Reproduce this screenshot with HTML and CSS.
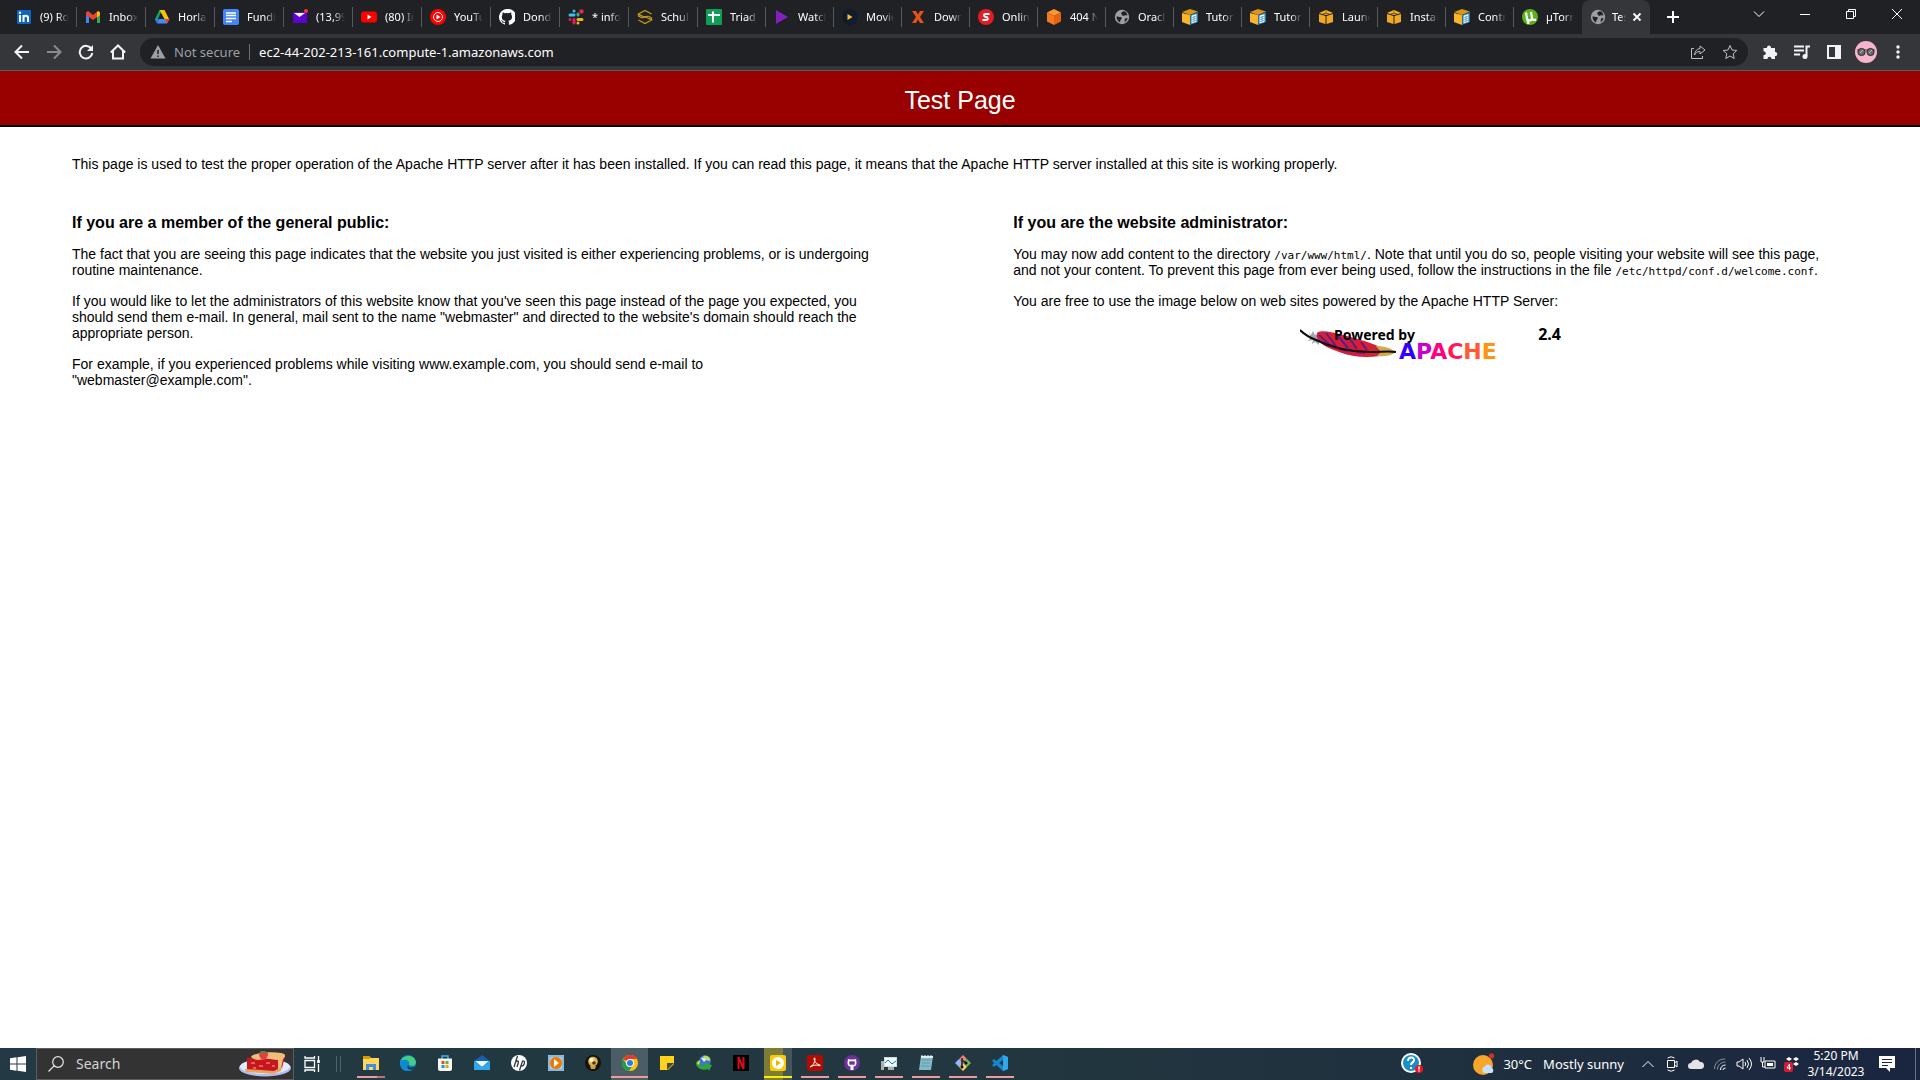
FILE: index.html
```html
<!DOCTYPE html>
<html lang="en">
<head>
<meta charset="utf-8">
<title>Test Page</title>
<link rel="stylesheet" href="styles.css">
</head>
<body>
<svg class="defs" aria-hidden="true">
  <symbol id="globe" viewBox="0 0 16 16"><circle cx="8" cy="8" r="7.200" fill="#9aa0a6"/><path d="M2.500 7.500c1.500-.5 2 .8 4 .5 1.500 0 1.500 2 .5 2.500-1 .5-.5 2-1 3-2-1-3.500-3-3.500-6zM8 3c1-1 3-1 4 0l1.500 3c-1 1-2 0-3 .5-1 .5-2 .5-2.500-.5-.5-1-1.500-1.500 0-3zM11 9.500l2.500-.5c0 2-1.500 3.500-3 4z" fill="#202124"/></symbol>
  <symbol id="cube" viewBox="0 0 16 16"><path d="M1 4l7-3 7 3-7 2z" fill="#f9b42c"/><path d="M1 5l6.500 2v8L1 13zM15 5L8.500 7v8L15 13z" fill="#efa922"/><path d="M8 2v2M5 4.500h6" stroke="#8a5f0b"/></symbol>
  <symbol id="cubedoc" viewBox="0 0 16 16"><path d="M0 3l8-3 8 2.500L8 6z" fill="#d9961a"/><path d="M0 4l8 2v10l-8-3z" fill="#fbb42c"/><path d="M8 6l8-3v10l-8 3z" fill="#2475a5"/><path d="M9.500 6.500l5-1.500v8l-5 1.500z" fill="#eaf6ff"/><path d="M10.500 8.500l3-1M10.500 10.500l3-1M10.500 12.500l3-1" stroke="#2682bb"/></symbol>
</svg>

<header class="browser">
  <div class="titlebar">
    <nav class="tabs" aria-label="Tabs">
      <a class="tab" href="#"><svg viewBox="0 0 16 16"><rect x="1" y="1" width="14" height="14" rx="1" fill="#0a66c2"/><path d="M4 6v7M7.500 6v7M7.500 9c0-3 4.500-3 4.500 0v4" fill="none" stroke="#fff" stroke-width="2"/><circle cx="4" cy="3.700" r="1.200" fill="#fff"/></svg><span>(9) Rol</span></a>
      <a class="tab" href="#"><svg viewBox="0 0 16 16"><path d="M1 4v10h3V6z" fill="#4285f4"/><path d="M15 4v10h-3V6z" fill="#34a853"/><path d="M1 3.500L3 2l5 4 5-4 2 1.500V6l-7 5-7-5z" fill="#ea4335"/><path d="M12 3l1.500-1L15 3.500V6l-3 2.500z" fill="#fbbc04"/></svg><span>Inbox (</span></a>
      <a class="tab" href="#"><svg viewBox="0 0 16 16"><path d="M5.500 1H8l-5.500 12L1 10z" fill="#0da960"/><path d="M5.500 1h5L15 10h-4.500z" fill="#ffc107"/><path d="M3 14.500L5 10h10.500L13 14.500z" fill="#4688f4"/><path d="M1 10h4l-2 4.500z" fill="#2684fc"/><path d="M11 10h4.500L13 14.500z" fill="#ea4335"/></svg><span>Horlar</span></a>
      <a class="tab" href="#"><svg viewBox="0 0 16 16"><rect width="16" height="16" rx="2" fill="#4285f4"/><path d="M3 4h10M3 6.500h10M3 9.500h10M3 12.500h6" stroke="#fff" stroke-width="1.500"/></svg><span>Fundin</span></a>
      <a class="tab" href="#"><svg viewBox="0 0 16 16"><rect x="1" y="3" width="14" height="11" rx="1" fill="#6001d2"/><path d="M2 4h11L7.500 8z" fill="#fff"/><circle cx="14" cy="2" r="2" fill="#ff333a"/></svg><span>(13,99</span></a>
      <a class="tab" href="#"><svg viewBox="0 0 16 16"><rect y="2.500" width="16" height="11" rx="3" fill="#f00"/><path d="M6.500 5.500v5L10.500 8z" fill="#fff"/></svg><span>(80) In</span></a>
      <a class="tab" href="#"><svg viewBox="0 0 16 16"><circle cx="8" cy="8" r="8" fill="#f00"/><circle cx="8" cy="8" r="4.500" fill="none" stroke="#fff"/><path d="M6.500 5.500v5L10.500 8z" fill="#fff"/></svg><span>YouTub</span></a>
      <a class="tab" href="#"><svg viewBox="0 0 16 16"><path fill="#fff" d="M8 0a8 8 0 0 0-2.500 15.600c.4.100.5-.2.500-.4v-1.500C3.800 14.200 3.300 13 3.300 13c-.4-.9-.9-1.200-.9-1.200-.7-.5.1-.5.100-.5.800.1 1.200.8 1.200.8.7 1.200 1.900.9 2.300.7 0-.6.300-.9.500-1.100-2-.2-3.700-.9-3.700-4 0-.9.300-1.600.8-2.100 0-.2-.4-1 .1-2.100 0 0 .7-.3 2.200.8a8 8 0 0 1 4 0c1.500-1.100 2.200-.8 2.200-.8.500 1.100.1 1.900.1 2.100.5.500.8 1.200.8 2.100 0 3.100-1.800 3.800-3.700 4 .3.200.6.700.6 1.500v2.200c0 .2.100.5.600.4A8 8 0 0 0 8 0"/></svg><span>Dondo</span></a>
      <a class="tab" href="#"><svg viewBox="0 0 16 16" fill="none" stroke-width="3" stroke-linecap="round"><path d="M6 2v0M2 6h4" stroke="#36c5f0"/><path d="M10 6V5" stroke="#2eb67d"/><path d="M10 10.500h4M10 14v0" stroke="#ecb22e"/><path d="M2 10.500v0M6 10.500V14" stroke="#e01e5a"/><circle cx="13.500" cy="2.500" r="1.300" fill="#fff" stroke="#e8223c" stroke-width="2"/></svg><span>* info-</span></a>
      <a class="tab" href="#"><svg viewBox="0 0 16 16" fill="none" stroke="#c79a1d" stroke-width="1.300"><path d="M14.500 5L8 1.500 1.500 5 8 8.500l3-1.500M1.500 11L8 14.500l6.500-3.500L8 7.500l-3 1.500M1.500 5v2l4 2M14.500 11V9l-3-2"/></svg><span>Schull</span></a>
      <a class="tab" href="#"><svg viewBox="0 0 16 16"><rect width="16" height="16" rx="1" fill="#0f9d58"/><path d="M2 6h12M7 2.500v11" stroke="#fff" stroke-width="2"/></svg><span>Triad -</span></a>
      <a class="tab" href="#"><svg viewBox="0 0 16 16"><path d="M2 1l12 7-12 7z" fill="#8320bd"/></svg><span>Watch</span></a>
      <a class="tab" href="#"><svg viewBox="0 0 16 16"><circle cx="8" cy="8" r="8" fill="#111c2c"/><path d="M5.500 5v6l5-3z" fill="#fbc02d"/></svg><span>Movie</span></a>
      <a class="tab" href="#"><svg viewBox="0 0 16 16"><path d="M2 2h4l2 3.500L10 2h4l-4 6 4 6h-4L8 10.500 6 14H2l4-6z" fill="#e8501c"/></svg><span>Down</span></a>
      <a class="tab" href="#"><svg viewBox="0 0 16 16"><circle cx="8" cy="8" r="8" fill="#e31b23"/><path d="M11.500 5H7.500C5 5 6 8 8 8s2.500 3 0 3H4.500" fill="none" stroke="#fff" stroke-width="2"/></svg><span>Online</span></a>
      <a class="tab" href="#"><svg viewBox="0 0 16 16"><path d="M8 0l7 3.500L8 7 1 3.500z" fill="#fb9632"/><path d="M1 3.500L8 7v9l-7-3.500z" fill="#f47b20"/><path d="M15 3.500L8 7v9l7-3.500z" fill="#e6620e"/></svg><span>404 No</span></a>
      <a class="tab" href="#"><svg><use href="#globe"/></svg><span>Oracle</span></a>
      <a class="tab" href="#"><svg><use href="#cubedoc"/></svg><span>Tutoria</span></a>
      <a class="tab" href="#"><svg><use href="#cubedoc"/></svg><span>Tutoria</span></a>
      <a class="tab" href="#"><svg><use href="#cube"/></svg><span>Launch</span></a>
      <a class="tab" href="#"><svg><use href="#cube"/></svg><span>Instanc</span></a>
      <a class="tab" href="#"><svg><use href="#cubedoc"/></svg><span>Contro</span></a>
      <a class="tab" href="#"><svg viewBox="0 0 16 16"><circle cx="8" cy="8" r="8" fill="#5bb31b"/><path d="M4 3.500l1 6c.5 3 5 2.500 5-.5l-1-6M10 9c.5 2 2 2.500 4 1.500M5 9l1.500 6" fill="none" stroke="#fff" stroke-width="2.200"/></svg><span>µTorre</span></a>
      <a class="tab tab-active" href="#" aria-current="page"><svg><use href="#globe"/></svg><span>Test</span><svg class="close" viewBox="0 0 10 10"><path d="M1.500 1.500l7 7M8.500 1.500l-7 7" stroke="#fff" stroke-width="1.800"/></svg></a>
    </nav>
    <button class="new-tab" aria-label="New tab"><svg viewBox="0 0 12 12"><path d="M6 0v12M0 6h12" stroke="#fff" stroke-width="2"/></svg></button>
    <div class="window-controls">
      <button aria-label="Search tabs"><svg viewBox="0 0 12 12"><path d="M1 3.500l5 5 5-5"/></svg></button>
      <button aria-label="Minimize"><svg viewBox="0 0 12 12"><path d="M1 6.500h10"/></svg></button>
      <button aria-label="Restore"><svg viewBox="0 0 12 12"><path d="M1.500 3.500h7v7h-7zM3.500 3V1.500h7v7H9"/></svg></button>
      <button aria-label="Close"><svg viewBox="0 0 12 12"><path d="M1 1l10 10M11 1L1 11"/></svg></button>
    </div>
  </div>
  <div class="toolbar">
    <button aria-label="Back"><svg viewBox="0 0 16 16"><path d="M15 8H2M8 1.500L1.500 8 8 14.500"/></svg></button>
    <button class="dim" aria-label="Forward"><svg viewBox="0 0 16 16"><path d="M1 8h13M8 1.500L14.500 8 8 14.500"/></svg></button>
    <button aria-label="Reload"><svg viewBox="0 0 16 16"><path d="M13.500 5A6.300 6.300 0 1 0 14.300 9"/><path d="M15 1v6H9z" fill="#f1f3f4" stroke="none"/></svg></button>
    <button aria-label="Home"><svg viewBox="0 0 16 16"><path d="M.8 8.500L8 1.500l7.200 7M3 7v7.500h10V7"/></svg></button>
    <div class="omnibox">
      <svg viewBox="0 0 16 16"><path d="M8 1l7.500 13.500H.5z" fill="#9aa0a6"/><path d="M8 6v4M8 11.500v1.500" stroke="#202124" stroke-width="1.500"/></svg>
      <label for="url">Not secure</label>
      <input id="url" type="text" value="ec2-44-202-213-161.compute-1.amazonaws.com">
      <button aria-label="Share"><svg class="thin" viewBox="0 0 16 16"><path d="M4 4.500H1.500v10h11V12M10 2l5 4-5 4V7.500C7 7.500 5.500 9 4.500 11c.3-3.500 2-6 5.500-6.500z"/></svg></button>
      <button aria-label="Bookmark"><svg class="thin" viewBox="0 0 16 16"><path d="M8 1.500l2 4.500 4.800.5-3.600 3.200 1 4.800L8 12l-4.200 2.500 1-4.800L1.200 6.500 6 6z"/></svg></button>
    </div>
    <button aria-label="Extensions"><svg viewBox="0 0 16 16"><path d="M1.500 4H5c-.5-3.500 4.500-3.500 4 0h4v4c3-.5 3 4.500 0 4v3H9.500c0-3-4-3-4 0h-4v-3.700c3 0 3-4 0-4z" fill="#f1f3f4" stroke="none"/></svg></button>
    <button aria-label="Media"><svg viewBox="0 0 16 16"><path d="M0 2.500h10M0 6.500h10M0 10.500h6M12.500 12V2.500H16"/><circle cx="11" cy="12.500" r="2.500" fill="#f1f3f4" stroke="none"/></svg></button>
    <button aria-label="Side panel"><svg viewBox="0 0 16 16"><path d="M2 2h12v12H2z"/><path d="M9 2h5v12H9z" fill="#f1f3f4" stroke="none"/></svg></button>
    <button class="avatar" aria-label="Profile"><svg viewBox="0 0 22 22"><circle cx="11" cy="11" r="11" fill="#f8b4cc" stroke="none"/><path d="M2 9h18" stroke="#40383c"/><circle cx="6.500" cy="11" r="3.600" fill="#666b6d" stroke="#292929"/><circle cx="15.500" cy="11" r="3.600" fill="#666b6d" stroke="#292929"/><path d="M5 12l3-3M14 12l3-3" stroke="#b9c0c0"/></svg></button>
    <button aria-label="Menu"><svg viewBox="0 0 16 16"><g fill="#f1f3f4" stroke="none"><circle cx="8" cy="3" r="1.700"/><circle cx="8" cy="8" r="1.700"/><circle cx="8" cy="13" r="1.700"/></g></svg></button>
  </div>
</header>

<main class="page">
  <h1>Test Page</h1>
  <div class="content">
    <p>This page is used to test the proper operation of the Apache HTTP server after it has been installed. If you can read this page, it means that the Apache HTTP server installed at this site is working properly.</p>
    <div class="columns">
      <section>
        <h2>If you are a member of the general public:</h2>
        <p>The fact that you are seeing this page indicates that the website you just visited is either experiencing problems, or is undergoing routine maintenance.</p>
        <p>If you would like to let the administrators of this website know that you've seen this page instead of the page you expected, you should send them e-mail. In general, mail sent to the name "webmaster" and directed to the website's domain should reach the appropriate person.</p>
        <p>For example, if you experienced problems while visiting www.example.com, you should send e-mail to "webmaster@example.com".</p>
      </section>
      <section>
        <h2>If you are the website administrator:</h2>
        <p>You may now add content to the directory <code>/var/www/html/</code>. Note that until you do so, people visiting your website will see this page, and not your content. To prevent this page from ever being used, follow the instructions in the file <code>/etc/httpd/conf.d/welcome.conf</code>.</p>
        <p>You are free to use the image below on web sites powered by the Apache HTTP Server:</p>
        <svg class="apache" viewBox="0 0 262 34" role="img" aria-label="Powered by Apache 2.4">
          <defs><linearGradient id="feather"><stop stop-color="#c8283d"/><stop offset=".3" stop-color="#e01b3c"/><stop offset=".5" stop-color="#c41e48"/><stop offset=".7" stop-color="#e11b35"/><stop offset="1" stop-color="#c02b3a"/></linearGradient></defs>
          <path d="M8 5l3 3 2-4 2 4 4-1v11l-4-3-3 2 1-4-5 1 3-4z" fill="#9daab2"/>
          <path d="M18 5c4-2 15 0 21 2 12 3 24 6 34 10l7 3v9c-14 2-28 1-41-4-8-3-16-6-20-11-3-3-3-7-1-9z" fill="url(#feather)"/>
          <path d="M19 8l10 9M26 6l10 13M38 9l10 12M50 12l7 10M61 15l6 8M24 16l10 3M40 22l9 2M56 25l9 1" fill="none" stroke="#57217b" stroke-width="2"/>
          <path d="M76 19c7 0 15 2 20 6-5 4-12 5-19 4l4-4z" fill="#d0ad4c"/>
          <path d="M0 3c5 5 11 8 16 10 16 8 34 12 55 12 10 0 18-1 25 0" fill="none" stroke="#16070d" stroke-width="2"/>
          <text x="34" y="13" class="logo-small">Powered by</text>
          <text x="261" y="13" class="logo-version" text-anchor="end">2.4</text>
          <text x="99" y="32" class="logo-name"><tspan fill="#3300ff">A</tspan><tspan fill="#cc00cc">P</tspan><tspan fill="#ff0080">A</tspan><tspan fill="#ff1a55">C</tspan><tspan fill="#ff5a33">H</tspan><tspan fill="#ff9410">E</tspan></text>
        </svg>
      </section>
    </div>
  </div>
</main>

<footer class="taskbar">
  <button class="start" aria-label="Start"><svg viewBox="0 0 16 16" fill="#fff"><path d="M0 2.200L6.500 1.300v6.200H0zM7.500 1.200L16 0v7.500H7.500zM0 8.500h6.500v6.200L0 13.800zM7.500 8.500H16V16l-8.500-1.200z"/></svg></button>
  <div class="search">
    <svg viewBox="0 0 16 16"><circle cx="10" cy="6" r="5.300" fill="none" stroke="#e8e8e8" stroke-width="1.200"/><path d="M6.300 9.700L.5 15.500" stroke="#e8e8e8" stroke-width="1.200"/></svg>
    <input type="text" placeholder="Search" aria-label="Search">
    <svg class="pie" viewBox="0 0 52 26"><ellipse cx="26" cy="17" rx="26" ry="8.500" fill="#aebef3"/><ellipse cx="26" cy="15.500" rx="25" ry="7.500" fill="#e3e9ff"/><path d="M8 7l30-1 8-1-3 12-9 4-26-2z" fill="#c4181e"/><path d="M12 6C14 2 31 0 42 2c5 1 5 3 2 6l-2 10-3 2V9c-5 0-8-2-13-1-5 1-10 2-14-2z" fill="#f0bd79"/><path d="M6 18l29 2 8-4-1 4-8 3-27-2z" fill="#e7a55e"/><path d="M12 12h4M20 15h4M27 12h4M33 15h3M14 17h3" stroke="#ef5b59" stroke-width="2"/><path d="M20 3c2-3 10-3 9 1-1 3-3 5-4 5-2 0-5-3-5-6z" fill="#e43d46"/><path d="M21 2l3-2 3 2" stroke="#4b9142" stroke-width="2" fill="none"/></svg>
  </div>
  <button class="taskview" aria-label="Task view"><svg viewBox="0 0 16 16" fill="none" stroke="#fff" stroke-width="1.300"><path d="M1 0v2h9.500V0M1 16v-2h9.500v2M1 4.500h9.500v7H1zM14.500 0v4M14.500 8v8"/><path d="M13.200 4h2.600v3h-2.600z" fill="#fff" stroke="none"/></svg></button>
  <span class="grip"></span>
  <nav class="apps" aria-label="Pinned apps">
    <button class="open stacked" aria-label="Explorer"><svg viewBox="0 0 16 16"><path d="M0 1h6l2 2h8v12H0z" fill="#ffd75e"/><path d="M0 1h6l2 2-2 1H0z" fill="#d99b00"/><path d="M3 9h10v6h-3v-3H6v3H3z" fill="#3f8fe0"/></svg></button>
    <button aria-label="Edge"><svg viewBox="0 0 16 16"><circle cx="8" cy="8" r="8" fill="#1679ca"/><path d="M0 8C1 0 14-2 16 7c0 5-5 4-7 3 1-3-1-5-4-5-3 0-5 2-5 3z" fill="#42cf82"/><path d="M0 8c0-3 3-4 6-3 3 1 3 3 2 5 1 3 4 4 7 2-3 5-8 4-9 4C2 15 0 12 0 8z" fill="#108ad5"/><path d="M8 10c0 3 5 3 7 1l-1 3c-4 2-8 0-6-4z" fill="#153f58"/></svg></button>
    <button aria-label="Store"><svg viewBox="0 0 16 16"><path d="M5 4V1h6v3" fill="none" stroke="#35b9ed" stroke-width="1.500"/><path d="M1 3.500h14V14q0 2-2 2H3q-2 0-2-2z" fill="#f6f6f6"/><path d="M4.500 6h3v3h-3z" fill="#f04b29"/><path d="M8.500 6h3v3h-3z" fill="#6bb42d"/><path d="M4.500 10h3v3h-3z" fill="#159bd8"/><path d="M8.500 10h3v3h-3z" fill="#eba800"/></svg></button>
    <button aria-label="Mail"><svg viewBox="0 0 16 16"><path d="M0 6l8-6 8 6v9H0z" fill="#1260ae"/><path d="M1 6h14l-7 6z" fill="#eef7ff"/><path d="M0 6l8 6 8-6v9H0z" fill="#2ca9e8"/></svg></button>
    <button aria-label="HP"><svg viewBox="0 0 16 16"><circle cx="8" cy="8" r="8" fill="#fff"/><path d="M6.500 1L3 12M5 6.500c3.500-2 2.500 1 1 5.500M8.500 15.500l3-9.500c3.500-1 2 5.500-1.500 5" fill="none" stroke="#263b45" stroke-width="1.300"/></svg></button>
    <button aria-label="Media player"><svg viewBox="0 0 16 16"><rect width="16" height="16" fill="#a9cbe8"/><path d="M1 1h14v14H1z" fill="none" stroke="#6da8d3"/><circle cx="8" cy="8" r="6" fill="#ef7900"/><path d="M6 4v8l5-4z" fill="#fff"/></svg></button>
    <button aria-label="Player"><svg viewBox="0 0 16 16"><circle cx="8" cy="8" r="8" fill="#17120c"/><circle cx="8" cy="6.500" r="4.800" fill="#e0b652"/><circle cx="6.500" cy="5" r="2.200" fill="#fff6c5"/><circle cx="9" cy="8" r="1.800" fill="#503510"/><path d="M5 11h6l-1 3H6z" fill="#d0a341"/></svg></button>
    <button class="active open" aria-label="Chrome"><svg viewBox="0 0 16 16"><circle cx="8" cy="8" r="8" fill="#fbc116"/><path d="M8 8L1 4A8 8 0 0 1 15 4H8z" fill="#e33b2e"/><path d="M1 4a8 8 0 0 0 6 12l4-6H5z" fill="#229b52"/><circle cx="8" cy="8" r="4" fill="#fff"/><circle cx="8" cy="8" r="3" fill="#287de5"/></svg></button>
    <button aria-label="Sticky notes"><svg viewBox="0 0 16 16"><path d="M1 1h14v8l-6 6H1z" fill="#ffd21c"/><path d="M8 8h7l-7 7z" fill="#4b493e"/></svg></button>
    <button aria-label="Download manager"><svg viewBox="0 0 16 16"><circle cx="9" cy="6" r="5.800" fill="#3a75d6"/><path d="M7 1c5-1 8 2 7 5L9 5z" fill="#b8dc68"/><path d="M5 3c2-1 4 0 5 2L8 7z" fill="#e8eef5"/><path d="M0 9c0-3 2-4 4-4-1 3 1 6 5 6l-1-3 8 2-3 6-1-2C6 16 1 13 0 9z" fill="#31a53a"/><path d="M1 8l3-3-1 5z" fill="#ffdf51"/></svg></button>
    <button aria-label="Netflix"><svg viewBox="0 0 16 16"><path d="M0 0h16v16H0z" fill="#000"/><path d="M5.500 14V2l5 12V2" fill="none" stroke="#d90b18" stroke-width="2"/></svg></button>
    <button class="downloading open" aria-label="Video player"><svg viewBox="0 0 16 16"><rect width="16" height="16" rx="2" fill="#f8cb0c"/><circle cx="8" cy="8" r="6" fill="#fff"/><path d="M6 5v6l5-3z" fill="#e8b800"/></svg></button>
    <button class="open" aria-label="Acrobat"><svg viewBox="0 0 16 16"><rect width="16" height="16" rx="2" fill="#b30b00"/><path d="M3 12c3-1 5-5 5-8 0-2-1-1-1 0 1 4 3 5 6 6 1 1-1 1-3 0-3 0-5 1-7 2z" fill="none" stroke="#fff"/></svg></button>
    <button class="open" aria-label="GitHub Desktop"><svg viewBox="0 0 16 16"><circle cx="8" cy="8" r="8" fill="#6c3295"/><path d="M4 4l2 .5h4l2-.5.5 4c0 2.500-1.500 3.500-3 3.500V15h-3v-3.500C5 11.500 3.500 10.500 3.500 8z" fill="#fff"/><path d="M5.300 6.300h5.400v3.400H5.300z" fill="#6c3295"/></svg></button>
    <button class="open" aria-label="Monitor"><svg viewBox="0 0 16 16"><path d="M3 2h13v10H3z" fill="#d6d9d4"/><path d="M4 3h11v8H4z" fill="#edfaff"/><path d="M4 8l3-3 4 4 4-3" fill="none" stroke="#1275bb"/><path d="M0 6h3v9H0zM7 12h6v3H7z" fill="#a9b1ad"/></svg></button>
    <button class="open" aria-label="Notepad"><svg viewBox="0 0 16 16"><path d="M3 1h12l-2 14H1z" fill="#82bac9"/><path d="M3 1h12v2H3z" fill="#dbe8e9"/><path d="M4 5h9M4 8h8M3 11h9" stroke="#659ba8"/><path d="M4 0v2M7 0v2M10 0v2M13 0v2" stroke="#fff"/></svg></button>
    <button class="open" aria-label="Git Bash"><svg viewBox="0 0 16 16"><path d="M8 0l4 4-4 4-4-4z" fill="#ef8078"/><path d="M4 4l4 4-4 4-4-4z" fill="#92b7ff"/><path d="M12 4l4 4-4 4-4-4z" fill="#72b854"/><path d="M8 8l4 4-4 4-4-4z" fill="#ffd15b"/><path d="M7 3v9M7 5l4 3" stroke="#222" stroke-width="1.500"/><circle cx="11" cy="8" r="1.500"/><circle cx="7" cy="12" r="1.500"/></svg></button>
    <button class="open" aria-label="VS Code"><svg viewBox="0 0 16 16"><path d="M11 0l5 2v12l-5 2-11-10 2-2 9 7V5l-9 7-2-2z" fill="#1687cc"/><path d="M11 0l5 2v12l-5 2z" fill="#30a8ee"/></svg></button>
  </nav>
  <div class="tray">
    <button class="help" aria-label="Help"><svg viewBox="0 0 22 22"><circle cx="10" cy="10" r="10" fill="#fff"/><circle cx="10" cy="10" r="8" fill="#198ec8"/><path d="M7 8c0-5 7-4 6-.5-.5 2-3 2-3 4.500M10 14v2" fill="none" stroke="#fff" stroke-width="2"/><circle cx="18" cy="16" r="4" fill="#ec1624"/><path d="M18 13.500v3M18 17.500v1" stroke="#fff" stroke-width="1.500"/></svg></button>
    <button class="weather"><svg viewBox="0 0 22 22"><circle cx="10" cy="12" r="10" fill="#f8a52b"/><path d="M10 19a4 4 0 0 1 2-6 4 4 0 0 1 7 2 3 3 0 0 1 0 5h-8z" fill="#c9e0fb"/><circle cx="18.500" cy="3" r="2.700" fill="#c93427"/></svg><span>30°C</span><span>Mostly sunny</span></button>
    <div class="status">
      <button aria-label="Hidden icons"><svg viewBox="0 0 16 16"><path d="M2.500 11L8 5.500l5.500 5.500"/></svg></button>
      <button aria-label="Camera"><svg viewBox="0 0 16 16"><path d="M3.500 4.500h7v7h-7zM10.500 7l2.500-2v6l-2.500-2M3.500 2q4-2.500 7 0M3.500 14q4 2.500 7 0"/></svg></button>
      <button aria-label="OneDrive"><svg viewBox="0 0 16 16"><path d="M3 13a3 3 0 0 1 0-6 5 5 0 0 1 9-1 3.500 3.500 0 0 1 1 7z" fill="#e2e4e6" stroke="none"/></svg></button>
      <button aria-label="Network"><svg viewBox="0 0 16 16"><path d="M2.500 13C2.500 7 7 3 13 3M5.500 13.500c0-4 3-7.500 8-7.500" stroke="#8a94a5"/><path d="M8.500 14c0-3 2-5 5-5M11 14q0-2 2.500-2"/></svg></button>
      <button aria-label="Volume"><svg viewBox="0 0 16 16"><path d="M1 6h2l4-3v10l-4-3H1zM9 6q1.500 2 0 4M11 4q3 4 0 8M13 2q5 6 0 12"/></svg></button>
      <button aria-label="Battery"><svg viewBox="0 0 16 16"><path d="M5 5h10v7H5zM1 3v3h3V3M1 1v2M4 1v2M2.500 6v5H5"/><path d="M7 7h6v3H7z" fill="#fff" stroke="none"/></svg></button>
      <button aria-label="Dropbox"><svg viewBox="0 0 16 16"><path d="M5 1l3 2-3 2-3-2zM12 1l3 2-3 2-3-2zM12 6l3 2-3 2-3-2z" fill="#fff" stroke="none"/><rect y="6" width="9" height="10" rx="2" fill="#d71934" stroke="none"/><path d="M5.500 14V8L3 12h4"/></svg></button>
    </div>
    <div class="clock"><time>5:20 PM</time><time>3/14/2023</time></div>
    <button class="notice" aria-label="Notifications"><svg viewBox="0 0 16 16"><path d="M0 0h16v12h-5v4l-4-4H0z" fill="#fff"/><path d="M3 3.500h10M3 6.500h10M3 9.500h6" stroke="#1a2740"/></svg></button>
  </div>
</footer>
</body>
</html>
```
FILE: styles.css
```css
* { box-sizing: border-box; }
body {
  margin: 0;
  min-height: 100vh;
  display: flex;
  flex-direction: column;
  background: #fff;
  color: #000;
  font: 14px/16px "Liberation Sans", Arial, sans-serif;
}
button {
  display: flex;
  align-items: center;
  justify-content: center;
  padding: 0;
  border: 0;
  background: none;
  color: inherit;
  font: inherit;
}
svg { flex: none; width: 16px; height: 16px; }
input {
  min-width: 0;
  padding: 0;
  border: 0;
  outline: 0;
  background: none;
  color: inherit;
  font: inherit;
}
.defs { position: absolute; width: 0; height: 0; }

/* Browser chrome */
.browser {
  background: #35363a;
  color: #fff;
  font-family: "Noto Sans", sans-serif;
}
.titlebar { display: flex; height: 34px; background: #202124; }
.tabs { flex: 0 1 1650px; display: flex; min-width: 0; padding-left: 8px; }
.tab {
  position: relative;
  flex: 0 1 68px;
  min-width: 0;
  display: flex;
  align-items: center;
  gap: 8px;
  padding: 0 8px;
  color: #fff;
  font-size: 11px;
  text-decoration: none;
}
.tab:nth-child(-n+10) { flex-basis: 69px; }
.tab:not(.tab-active)::after {
  content: "";
  position: absolute;
  right: 0;
  top: 7px;
  width: 1px;
  height: 20px;
  background: #55585c;
}
.tab:nth-last-child(2)::after { display: none; }
.tab span {
  flex: 1;
  min-width: 0;
  overflow: hidden;
  white-space: nowrap;
  mask-image: linear-gradient(to right, #000 60%, transparent);
}
.tab-active { gap: 6px; border-radius: 8px 8px 0 0; background: #35363a; }
.tab-active .close { width: 10px; height: 10px; }
.new-tab { width: 45px; }
.new-tab svg { width: 12px; height: 12px; }
.window-controls { display: flex; height: 28px; margin-left: auto; }
.window-controls button { width: 46px; }
.window-controls svg { width: 12px; height: 12px; fill: none; stroke: #fff; }

.toolbar {
  display: flex;
  align-items: center;
  height: 37px;
  padding: 0 6px;
  border-bottom: 1px solid #5b5c60;
}
.toolbar button { width: 32px; height: 28px; }
.toolbar svg { fill: none; stroke: #f1f3f4; stroke-width: 2; }
.toolbar .dim { opacity: .45; }
.toolbar .thin { stroke: #bdc1c6; stroke-width: 1; }
.toolbar .avatar svg { width: 22px; height: 22px; stroke-width: 1; }
.omnibox {
  flex: 1;
  display: flex;
  align-items: center;
  height: 28px;
  margin: 0 6px;
  padding: 0 2px 0 10px;
  border-radius: 14px;
  background: #202124;
  font-size: 13px;
}
.omnibox > svg { stroke: none; }
.omnibox label {
  margin: 0 9px 0 8px;
  padding-right: 9px;
  border-right: 1px solid #6b6e72;
  color: #9aa0a6;
}
.omnibox input { flex: 1; }

/* Apache page */
.page { flex: 1; }
h1 {
  margin: 0;
  padding: 16px 0 12px;
  border-bottom: 2px solid #000;
  background: #900;
  color: #fff;
  font-size: 25px;
  font-weight: 400;
  line-height: 26px;
  text-align: center;
}
.content { padding: 29px 72px; }
.content p { margin: 0 0 15px; }
.columns {
  display: grid;
  grid-template-columns: 47% 47%;
  justify-content: space-between;
  padding-top: 26px;
}
.columns p { padding-right: 24px; }
h2 { margin: 0 0 13px; font-size: 16px; line-height: 20px; }
code { font: 11px/12px "DejaVu Sans Mono", monospace; }
.apache { display: block; width: 262px; height: 34px; margin: 18px auto 0; }
.logo-small { font: 700 14px "Noto Sans", sans-serif; }
.logo-version { font: 700 16px "Noto Sans", sans-serif; }
.logo-name { font: 700 22px "DejaVu Sans", sans-serif; }

/* Taskbar */
.taskbar {
  display: flex;
  align-items: stretch;
  height: 32px;
  background: linear-gradient(to right, #233a44, #22373f 50%, #1f303e 75%, #1a2540);
  color: #fff;
  font: 14px/16px "Noto Sans", sans-serif;
}
.start { width: 36px; }
.search {
  display: flex;
  align-items: center;
  gap: 12px;
  width: 258px;
  padding: 0 2px 0 11px;
  border: 1px solid #5c5c5c;
  background: #333;
}
.search input { flex: 1; }
.search input::placeholder { color: #d5d5d5; opacity: 1; }
.search .pie { width: 52px; height: 26px; }
.taskview { width: 36px; }
.grip {
  align-self: center;
  width: 5px;
  height: 16px;
  margin: 0 11px 0 6px;
  border: solid #536269;
  border-width: 0 1px;
}
.apps { display: flex; }
.apps button { width: 37px; padding-bottom: 2px; }
.open {
  background: linear-gradient(#f29999, #f29999) center bottom 2px / 28px 2px no-repeat;
}
.apps .active {
  background-color: #4b5d65;
  background-size: 37px 2px;
}
.stacked {
  background-image: linear-gradient(to right, #f29999 70%, #b97376 70%);
}
.downloading {
  background:
    linear-gradient(#ffee00, #ffee00) center bottom 2px / 28px 2px no-repeat,
    linear-gradient(to right, #7d7d38 68%, #43565b 68%) center / 28px 100% no-repeat;
}
.tray {
  display: flex;
  align-items: center;
  margin: 0 4px 0 auto;
  border-right: 1px solid #68717f;
}
.help, .help svg, .weather svg { width: 22px; height: 22px; }
.help { margin-right: 50px; }
.weather { gap: 8px; margin-right: 12px; font-size: 13px; }
.weather span + span { margin-left: 3px; }
.status { display: flex; }
.status button { width: 24px; height: 32px; }
.status svg { fill: none; stroke: #fff; stroke-width: 1; }
.clock { width: 64px; font-size: 12px; text-align: center; }
.clock time { display: block; }
.notice { width: 38px; margin-right: 9px; }
```
